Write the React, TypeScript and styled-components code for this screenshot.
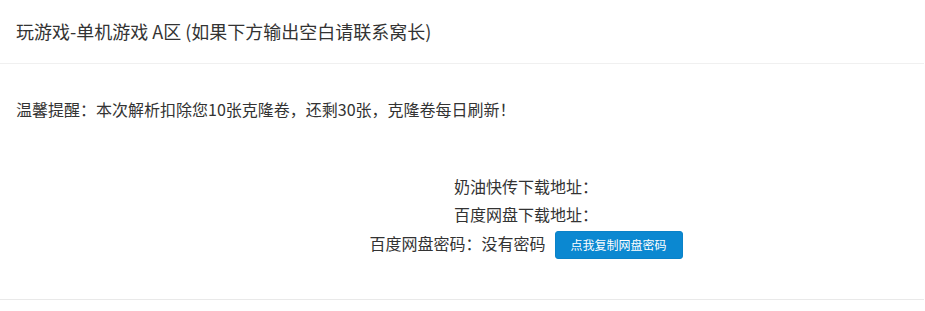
import React from "react";
import styled, {createGlobalStyle} from "styled-components";

const GlobalStyle = createGlobalStyle`
  body {
    margin: 0;
    background: #ffffff;
    font-family: "Noto Sans CJK SC", "Noto Sans", "Liberation Sans", sans-serif;
    color: #333333;
  }
`

const Panel = styled.div`
  width: 924px;
  background: #ffffff;
  border-bottom: 1px solid #e9e9e9;
  box-shadow: 0 1px 1px rgba(0, 0, 0, 0.04);
`

const Header = styled.div`
  padding: 18px 16px;
  font-size: 18px;
  line-height: 27px;
  border-bottom: 1px solid #f0f0f0;
`

const Body = styled.div`
  padding: 33px 16px 40px;
  font-size: 16px;
`

const Notice = styled.p`
  margin: 0;
  line-height: 24px;
`

const Links = styled.div`
  margin-top: 51px;
  padding-left: 128px;
  text-align: center;
`

const Line = styled.div<{ $tall?: boolean }>`
  line-height: ${({$tall}) => $tall ? '30px' : '28px'};
`

const CopyButton = styled.button`
  display: inline-block;
  vertical-align: middle;
  margin: -2px 0 0 9px;
  width: 128px;
  height: 28px;
  padding: 0;
  border: 1px solid #0a82c8;
  border-radius: 3px;
  background-color: #0b88d1;
  color: #ffffff;
  font-family: inherit;
  font-size: 12px;
  line-height: 26px;
  cursor: pointer;
`

const App = () => {
    return (<>
        <GlobalStyle/>
        <Panel>
            <Header>玩游戏-单机游戏 A区 (如果下方输出空白请联系窝长)</Header>
            <Body>
                <Notice>温馨提醒：本次解析扣除您10张克隆卷，还剩30张，克隆卷每日刷新！</Notice>
                <Links>
                    <Line>奶油快传下载地址：</Line>
                    <Line>百度网盘下载地址：</Line>
                    <Line $tall>百度网盘密码：没有密码<CopyButton>点我复制网盘密码</CopyButton></Line>
                </Links>
            </Body>
        </Panel>
    </>)
}

export default App
